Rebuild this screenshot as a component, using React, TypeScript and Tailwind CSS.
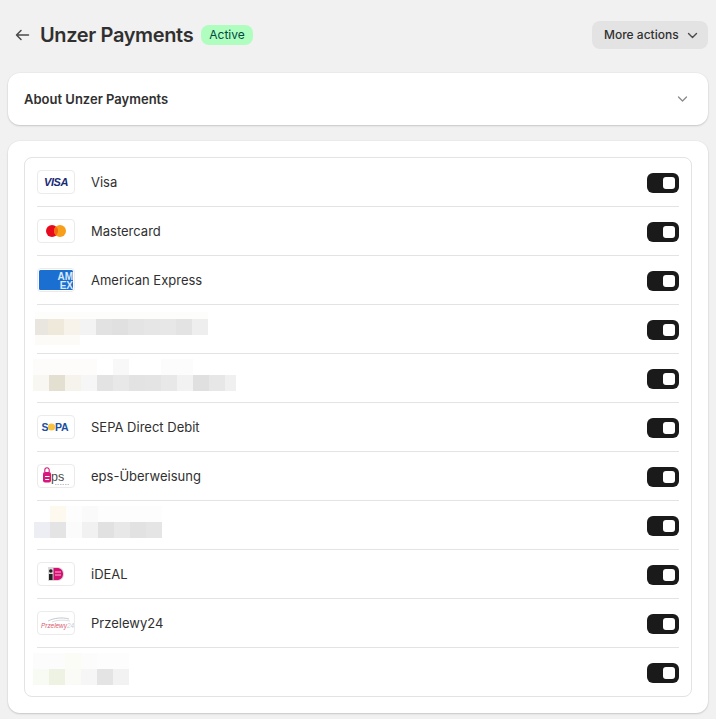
import React from 'react';

// blurred rows from the screenshot, each strip is a line of 16px blocks
interface Strip {
  height: number;
  blocks: [number, string][];
}

const Mosaic: React.FC<{ strips: Strip[]; top: number; left: number }> = ({ strips, top, left }) => (
  <div className="flex flex-col self-start" style={{ marginTop: top, marginLeft: left }}>
    {strips.map((strip, i) => (
      <div key={i} className="flex" style={{ height: strip.height }}>
        {strip.blocks.map(([w, color], j) => (
          <div key={j} style={{ width: w, backgroundColor: color }} />
        ))}
      </div>
    ))}
  </div>
);

const LogoBox: React.FC<{ children: React.ReactNode }> = ({ children }) => (
  <div className="flex h-6 w-[38px] shrink-0 items-center justify-center overflow-hidden rounded-[4px] border border-[#ebebeb] bg-white">
    {children}
  </div>
);

const VisaLogo = () => (
  <svg width="36" height="22" viewBox="0 0 36 22">
    <text x="18" y="15" textAnchor="middle" fontFamily="Liberation Sans" fontSize="11" fontWeight="700" fontStyle="italic" fill="#1a2a75" letterSpacing="-0.4">VISA</text>
  </svg>
);

const MastercardLogo = () => (
  <svg width="36" height="22" viewBox="0 0 36 22">
    <circle cx="14" cy="11" r="6" fill="#e8091c" />
    <circle cx="22" cy="11" r="6" fill="#f79e1b" />
    <path d="M18 6.5a6 6 0 0 1 0 9a6 6 0 0 1 0-9z" fill="#f26a12" />
  </svg>
);

const AmexLogo = () => (
  <svg width="36" height="22" viewBox="0 0 36 22">
    <rect x="1" y="1" width="34" height="20" rx="1.5" fill="#1b6fd1" />
    <text x="35" y="10.500" textAnchor="end" fontFamily="Liberation Sans" fontSize="10" fontWeight="700" fill="#dbe9fa">AM</text>
    <text x="35" y="19.500" textAnchor="end" fontFamily="Liberation Sans" fontSize="10" fontWeight="700" fill="#dbe9fa">EX</text>
  </svg>
);

const SepaLogo = () => (
  <svg width="36" height="22" viewBox="0 0 36 22">
    <text x="3.500" y="14.800" fontFamily="Liberation Sans" fontSize="10.500" fontWeight="700" fill="#1d4f9f">S</text>
    <circle cx="13.500" cy="11" r="3.600" fill="#f6c342" />
    <text x="17" y="14.800" fontFamily="Liberation Sans" fontSize="10.500" fontWeight="700" fill="#1d4f9f" letterSpacing="-0.2">PA</text>
  </svg>
);

const EpsLogo = () => (
  <svg width="36" height="22" viewBox="0 0 36 22">
    <path d="M6.800 7V5a2.200 2.200 0 0 1 4.400 0v2" fill="none" stroke="#d6187e" strokeWidth="1.100" />
    <rect x="5" y="7" width="8" height="10.500" rx="2" fill="#d6187e" />
    <path d="M7 11.500h4.500M7.200 14.500h4" stroke="#fff" strokeWidth="1.200" />
    <text x="13" y="16" fontFamily="Liberation Sans" fontSize="12.500" fill="#4a4a4a">ps</text>
    <path d="M17 19.500h15" stroke="#b5b5b5" strokeWidth="0.800" strokeDasharray="1.500 1" />
  </svg>
);

const IdealLogo = () => (
  <svg width="36" height="22" viewBox="0 0 36 22">
    <path d="M10 4h9c4.500 0 7 3 7 7s-2.500 7-7 7h-9z" fill="#d9d9d9" />
    <rect x="11" y="11" width="3.600" height="6" fill="#222" />
    <circle cx="12.800" cy="8" r="1.800" fill="#222" />
    <path d="M15.500 5h3.500c3.800 0 6 2.600 6 6s-2.200 6-6 6h-3.500z" fill="#d50f72" />
    <path d="M17 9h6M17 12h6" stroke="#f7b8d5" strokeWidth="1" />
  </svg>
);

const PrzelewyLogo = () => (
  <svg width="36" height="22" viewBox="0 0 36 22">
    <path d="M10 9c6-3 14-4 21-2" fill="none" stroke="#aab0bb" strokeWidth="0.700" />
    <path d="M14 10c5-2 11-2.500 18-1" fill="none" stroke="#c3c7ce" strokeWidth="0.600" />
    <text x="3" y="15.500" fontFamily="Liberation Sans" fontSize="6.400" fontStyle="italic" fill="#d9576c">
      Przelewy<tspan fill="#c9ccd2">24</tspan>
    </text>
  </svg>
);

const Toggle = () => (
  <div className="mt-[2px] ml-auto flex h-5 w-8 shrink-0 items-center justify-end rounded-[6px] bg-[#1a1a1a] pr-1">
    <div className="h-3 w-3 rounded-[3px] bg-white" />
  </div>
);

const Row: React.FC<{ children: React.ReactNode; last?: boolean }> = ({ children, last }) => (
  <div className={`flex items-center ${last ? 'h-12' : 'h-[49px] border-b border-[#e3e3e3]'}`}>
    {children}
    <Toggle />
  </div>
);

const Method: React.FC<{ logo: React.ReactNode; name: string }> = ({ logo, name }) => (
  <Row>
    <LogoBox>{logo}</LogoBox>
    <span className="ml-4 pt-[2px] text-[13px] text-[#303030]">{name}</span>
  </Row>
);

export default function App() {
  return (
    <div className="min-h-[719px] bg-[#f1f1f1] px-2 font-['Inter',sans-serif]">
      <header className="flex h-[73px] items-start pt-[21px]">
        <div className="flex h-7 items-center">
          <svg width="16" height="16" viewBox="0 0 16 16" className="ml-[6px]" fill="none" stroke="#4a4a4a" strokeWidth="1.5" strokeLinecap="round" strokeLinejoin="round">
            <path d="M2.500 8h12M7 3.500 2.500 8 7 12.500" />
          </svg>
          <h1 className="ml-[10px] text-[20px] leading-7 font-semibold tracking-[-0.36px] text-[#303030]">Unzer Payments</h1>
          <span className="ml-2 flex h-5 items-center rounded-lg bg-[#affebf] px-2 text-xs font-normal text-[#014b40]">Active</span>
        </div>
        <button className="ml-auto flex h-7 w-[116px] items-center rounded-lg bg-[#e3e3e3] pl-3 text-xs font-medium text-[#303030]">
          More actions
          <svg width="12" height="12" viewBox="0 0 12 12" className="ml-2" fill="none" stroke="#4a4a4a" strokeWidth="1.4" strokeLinecap="round" strokeLinejoin="round">
            <path d="M1.500 4.500 5.500 8.500 9.500 4.500" />
          </svg>
        </button>
      </header>

      <section className="flex h-[52px] items-center rounded-xl bg-white pr-[19px] pl-4 shadow-[0_1px_2px_rgba(0,0,0,0.16),0_0_0_1px_rgba(0,0,0,0.02)]">
        <h2 className="pt-[2px] text-[13px] font-semibold text-[#303030]">About Unzer Payments</h2>
        <svg width="12" height="12" viewBox="0 0 12 12" className="ml-auto" fill="none" stroke="#8a8a8a" strokeWidth="1.300" strokeLinecap="round" strokeLinejoin="round">
          <path d="M1.500 4 5.500 8 9.500 4" />
        </svg>
      </section>

      <section className="mt-4 rounded-xl bg-white p-4 shadow-[0_1px_2px_rgba(0,0,0,0.16),0_0_0_1px_rgba(0,0,0,0.02)]">
        <div className="rounded-lg border border-[#e3e3e3] px-3">
          <Method logo={<VisaLogo />} name="Visa" />
          <Method logo={<MastercardLogo />} name="Mastercard" />
          <Method logo={<AmexLogo />} name="American Express" />
          <Row>
            <Mosaic
              top={7}
              left={-2}
              strips={[
                { height: 7, blocks: [[173, '#fdfdfb']] },
                {
                  height: 16,
                  blocks: [
                    [13, '#e9e6df'], [16, '#efe9dc'], [16, '#f7f3ea'], [16, '#f3f3f3'], [16, '#e2e2e2'], [16, '#e0e0e0'],
                    [16, '#e4e4e4'], [16, '#e6e6e6'], [16, '#e7e7e7'], [16, '#e3e3e3'], [16, '#eeeeee'],
                  ],
                },
                { height: 10, blocks: [[45, '#fcfbf7']] },
              ]}
            />
          </Row>
          <Row>
            <Mosaic
              top={5}
              left={-4}
              strips={[
                {
                  height: 16,
                  blocks: [[64, '#fdfcfa'], [16, '#ffffff'], [16, '#f8f8f8'], [32, '#ffffff'], [32, '#fcfcfc']],
                },
                {
                  height: 16,
                  blocks: [
                    [16, '#f8f7f2'], [16, '#e3e0d2'], [16, '#f6f3ed'], [16, '#f6f6f6'], [16, '#e3e3e3'], [16, '#e8e8e8'], [16, '#e3e3e3'],
                    [16, '#e4e4e4'], [16, '#e8e8e8'], [16, '#f2f2f2'], [16, '#e0e0e0'], [16, '#e7e7e7'], [11, '#f0f0f0'],
                  ],
                },
              ]}
            />
          </Row>
          <Method logo={<SepaLogo />} name="SEPA Direct Debit" />
          <Method logo={<EpsLogo />} name="eps-Überweisung" />
          <Row>
            <Mosaic
              top={5}
              left={-3}
              strips={[
                {
                  height: 16,
                  blocks: [[16, '#ffffff'], [16, '#fef9ef'], [16, '#fdfdfd'], [16, '#fafafa'], [64, '#fdfdfd']],
                },
                {
                  height: 16,
                  blocks: [
                    [16, '#eceef3'], [16, '#e4e4e4'], [16, '#fbfbfb'], [16, '#f1f1f1'], [16, '#e1e1e1'], [16, '#e8e8e8'], [16, '#e2e2e2'], [16, '#e5e5e5'],
                  ],
                },
              ]}
            />
          </Row>
          <Method logo={<IdealLogo />} name="iDEAL" />
          <Method logo={<PrzelewyLogo />} name="Przelewy24" />
          <Row last>
            <Mosaic
              top={5}
              left={-4}
              strips={[
                {
                  height: 16,
                  blocks: [[32, '#fcfcfc'], [16, '#fbfcf6'], [16, '#fcfcfc'], [32, '#fdfdfd']],
                },
                {
                  height: 16,
                  blocks: [[16, '#f8faf4'], [16, '#eef2e3'], [16, '#fafbf6'], [16, '#f6f6f6'], [16, '#e4e4e4'], [16, '#f2f2f2']],
                },
              ]}
            />
          </Row>
        </div>
      </section>
    </div>
  );
}
